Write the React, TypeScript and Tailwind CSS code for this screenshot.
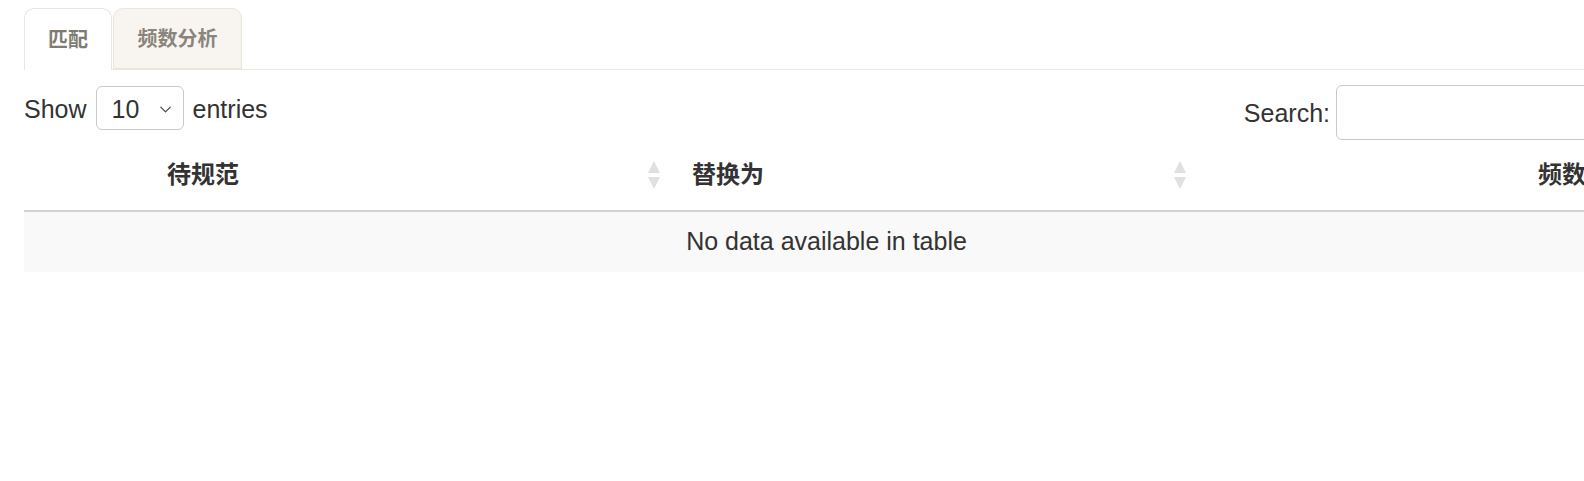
import { ChevronDown } from "lucide-react";

function SortIcon() {
  return (
    <span className="absolute right-[8px] top-1/2 -translate-y-1/2 flex flex-col items-center gap-[4px]">
      <span className="block w-0 h-0 border-l-[6.5px] border-r-[6.5px] border-b-[12px] border-l-transparent border-r-transparent border-b-[#e0e0e0]" />
      <span className="block w-0 h-0 border-l-[6.5px] border-r-[6.5px] border-t-[12px] border-l-transparent border-r-transparent border-t-[#e0e0e0]" />
    </span>
  );
}

export default function App() {
  return (
    <div className="w-[1584px] h-[481px] overflow-hidden bg-white font-['Liberation_Sans','Noto_Sans_CJK_SC',sans-serif] text-[#333]">
      <div className="w-[1660px] pl-[24px] pt-[8px]">
        {/* Tabs */}
        <div className="flex items-end border-b border-[#ebe6dc] h-[62px]">
          <div className="h-[62px] w-[88px] flex items-center justify-center bg-white border border-b-0 border-[#ebe6dc] rounded-t-[10px] text-[20px] font-semibold text-[#7f7b74] -mb-px">
            匹配
          </div>
          <div className="ml-[1px] h-[61px] w-[129px] flex items-center justify-center bg-[#f8f5f0] border border-[#ebe6dc] rounded-t-[10px] text-[20px] font-semibold text-[#8a857c]">
            频数分析
          </div>
        </div>

        {/* Controls */}
        <div className="w-[1605px] h-[70px] flex justify-between items-start">
          <div className="flex items-center gap-[9px] text-[25px] mt-[16px] h-[44px]">
            <span className="pt-[3px]">Show</span>
            <div className="h-[44px] w-[88px] border border-[#c9c9c9] rounded-[6px] flex items-center justify-between pl-[15px] pr-[8px]">
              <span className="pt-[3px]">10</span>
              <ChevronDown size={19} strokeWidth={1.5} className="text-[#444] mt-[3px]" />
            </div>
            <span className="pt-[3px]">entries</span>
          </div>
          <div className="flex items-center gap-[6px] text-[25px] mt-[15px]">
            <span className="pt-[2px]">Search:</span>
            <div className="h-[55px] w-[293px] border border-[#c9c9c9] rounded-[6px]" />
          </div>
        </div>

        {/* Table */}
        <table className="w-[1605px] border-collapse table-fixed">
          <colgroup>
            <col className="w-[644px]" />
            <col className="w-[526px]" />
            <col className="w-[435px]" />
          </colgroup>
          <thead>
            <tr className="h-[71px] border-b-2 border-[#d2d2d2]">
              <th className="relative text-left pl-[143px] text-[24px] font-bold">
                待规范
                <SortIcon />
              </th>
              <th className="relative text-left pl-[24px] text-[24px] font-bold">
                替换为
                <SortIcon />
              </th>
              <th className="relative text-left pl-[344px] text-[24px] font-bold whitespace-nowrap">
                频数
                <SortIcon />
              </th>
            </tr>
          </thead>
          <tbody>
            <tr className="h-[61px] bg-[#f9f9f9]">
              <td colSpan={3} className="text-center text-[25px]">
                No data available in table
              </td>
            </tr>
          </tbody>
        </table>
      </div>
    </div>
  );
}
